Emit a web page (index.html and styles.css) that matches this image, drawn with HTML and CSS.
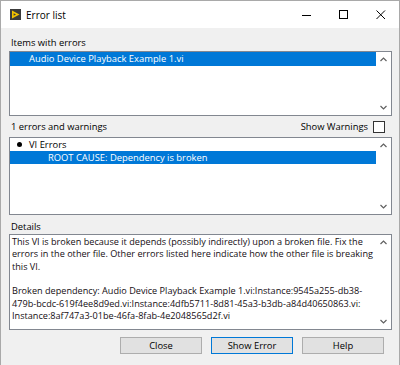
FILE: index.html
```html
<!DOCTYPE html>
<html lang="en">
<head>
    <meta charset="UTF-8">
    <title>Error list</title>
    <link rel="stylesheet" href="styles.css">
</head>
<body>
    <div class="window">
        <div class="titlebar">
            <svg class="app-icon" width="11" height="11" viewBox="0 0 11 11">
                <rect width="11" height="11" fill="#3b3b3b"/>
                <path d="M2 1.5 L9.5 5.5 L2 9.5 Z" fill="#f3c300"/>
                <path d="M3.6 4.2 L6 5.5 L3.6 6.8 Z" fill="#3b3b3b"/>
            </svg>
            <span class="title">Error list</span>
            <div class="controls">
                <div class="ctrl">
                    <svg width="10" height="10" viewBox="0 0 10 10"><path d="M0 5.5 H9" stroke="#000" stroke-width="1"/></svg>
                </div>
                <div class="ctrl">
                    <svg width="10" height="10" viewBox="0 0 10 10"><rect x="0.5" y="0.5" width="8" height="8" fill="none" stroke="#000" stroke-width="1"/></svg>
                </div>
                <div class="ctrl">
                    <svg width="10" height="10" viewBox="0 0 10 10"><path d="M0.5 0.5 L9 9 M9 0.5 L0.5 9" stroke="#000" stroke-width="1"/></svg>
                </div>
            </div>
        </div>

        <div class="content">
            <div class="label">Items with errors</div>
            <div class="listbox items-list">
                <div class="rows">
                    <div class="row selected">Audio Device Playback Example 1.vi</div>
                </div>
                <div class="scrollbar">
                    <div class="arrow"><svg width="7" height="5" viewBox="0 0 7 5"><path d="M0.5 4 L3.5 1 L6.5 4" fill="none" stroke="#606060" stroke-width="1.2"/></svg></div>
                    <div class="arrow"><svg width="7" height="5" viewBox="0 0 7 5"><path d="M0.5 1 L3.5 4 L6.5 1" fill="none" stroke="#606060" stroke-width="1.2"/></svg></div>
                </div>
            </div>

            <div class="status-row">
                <span>1 errors and warnings</span>
                <span class="show-warnings">Show Warnings <span class="checkbox"></span></span>
            </div>

            <div class="listbox errors-list">
                <div class="rows">
                    <div class="row group"><span class="bullet"></span>VI Errors</div>
                    <div class="row selected child">ROOT CAUSE: Dependency is broken</div>
                </div>
                <div class="scrollbar">
                    <div class="arrow"><svg width="7" height="5" viewBox="0 0 7 5"><path d="M0.5 4 L3.5 1 L6.5 4" fill="none" stroke="#606060" stroke-width="1.2"/></svg></div>
                    <div class="arrow"><svg width="7" height="5" viewBox="0 0 7 5"><path d="M0.5 1 L3.5 4 L6.5 1" fill="none" stroke="#606060" stroke-width="1.2"/></svg></div>
                </div>
            </div>

            <div class="label details-label">Details</div>
            <div class="listbox details">
                <div class="details-text">
                    <div>This VI is broken because it depends (possibly indirectly) upon a broken file. Fix the</div>
                    <div>errors in the other file. Other errors listed here indicate how the other file is breaking</div>
                    <div>this VI.</div>
                    <div>&nbsp;</div>
                    <div>Broken dependency: Audio Device Playback Example 1.vi:Instance:9545a255-db38-</div>
                    <div>479b-bcdc-619f4ee8d9ed.vi:Instance:4dfb5711-8d81-45a3-b3db-a84d40650863.vi:</div>
                    <div>Instance:8af747a3-01be-46fa-8fab-4e2048565d2f.vi</div>
                </div>
                <div class="scrollbar">
                    <div class="arrow"><svg width="7" height="5" viewBox="0 0 7 5"><path d="M0.5 4 L3.5 1 L6.5 4" fill="none" stroke="#606060" stroke-width="1.2"/></svg></div>
                    <div class="arrow"><svg width="7" height="5" viewBox="0 0 7 5"><path d="M0.5 1 L3.5 4 L6.5 1" fill="none" stroke="#606060" stroke-width="1.2"/></svg></div>
                </div>
            </div>

            <div class="buttons">
                <button class="btn">Close</button>
                <button class="btn default">Show Error</button>
                <button class="btn">Help</button>
            </div>
        </div>
    </div>
</body>
</html>
```

FILE: styles.css
```css
:root {
    --face: #f0f0f0;
    --select: #0078d7;
    --frame: #828790;
    --text: #000;
}

* {
    margin: 0;
    padding: 0;
    box-sizing: border-box;
}

body {
    font-family: 'Open Sans', 'Noto Sans', sans-serif;
    font-size: 9.4px;
    color: var(--text);
    background-color: var(--face);
}

.window {
    width: 400px;
    height: 365px;
    border: 1px solid #a9a9a9;
    border-bottom: none;
    background-color: var(--face);
    display: flex;
    flex-direction: column;
}

/* title bar */
.titlebar {
    height: 27px;
    background-color: #fff;
    display: flex;
    align-items: center;
}

.app-icon {
    margin-left: 9px;
    margin-top: -1px;
}

.title {
    margin-left: 5px;
    font-size: 10px;
}

.controls {
    margin-left: auto;
    display: flex;
    height: 100%;
}

.ctrl {
    width: 37px;
    display: flex;
    align-items: center;
    justify-content: center;
}

/* dialog body */
.content {
    padding: 9px 7px 0 8px;
}

.label {
    padding-left: 2px;
    line-height: 12px;
    height: 12px;
}

.listbox {
    border: 1px solid var(--frame);
    background-color: #fff;
    display: flex;
}

.rows {
    flex: 1;
}

.row {
    height: 13px;
    line-height: 13px;
    white-space: nowrap;
}

.row.selected {
    background-color: var(--select);
    color: #fff;
}

.scrollbar {
    width: 15px;
    display: flex;
    flex-direction: column;
    justify-content: space-between;
}

.arrow {
    height: 15px;
    display: flex;
    align-items: center;
    justify-content: center;
}

.items-list {
    margin-top: 2px;
    height: 65px;
}

.items-list .row {
    height: 14px;
    line-height: 14px;
    padding-left: 19px;
}

.status-row {
    margin-top: 5px;
    height: 12px;
    line-height: 12px;
    padding: 0 7px 0 2px;
    display: flex;
    justify-content: space-between;
    align-items: center;
}

.show-warnings {
    display: flex;
    align-items: center;
}

.checkbox {
    width: 12px;
    height: 12px;
    margin-left: 5px;
    border: 1px solid #333;
    background-color: #fff;
}

.errors-list {
    margin-top: 4px;
    height: 78px;
}

.row.group {
    padding-left: 7px;
    display: flex;
    align-items: center;
}

.bullet {
    width: 5px;
    height: 5px;
    border-radius: 50%;
    background-color: #000;
    margin-right: 7px;
}

.row.child {
    padding-left: 38px;
}

.details-label {
    margin-top: 6px;
}

.details {
    margin-top: 1px;
    height: 96px;
}

.details-text {
    flex: 1;
    min-width: 0;
    padding: 1px 0 0 2px;
    font-size: 9.15px;
    line-height: 12.35px;
    white-space: nowrap;
    color: #140d12;
}

/* buttons */
.buttons {
    margin-top: 7px;
    padding-right: 8px;
    display: flex;
    justify-content: flex-end;
    gap: 9px;
}

.btn {
    width: 82px;
    height: 17px;
    font-family: inherit;
    font-size: 9.4px;
    color: #000;
    background-color: #e1e1e1;
    border: 1px solid #adadad;
}

.btn.default {
    border-color: var(--select);
}
```
